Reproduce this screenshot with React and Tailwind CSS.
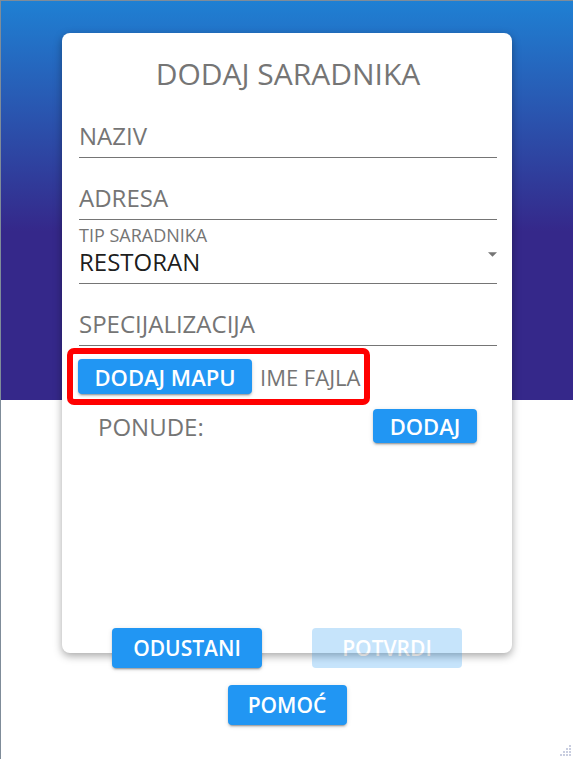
import React from 'react';

const font = { fontFamily: '"Open Sans", "Noto Sans", Arial, sans-serif' };

const Field = ({ label, pt }) => (
  <div className={`${pt} pb-[5px] border-b border-[#757575]`}>
    <div className="text-[24px] leading-[32px] text-[#757575]">{label}</div>
  </div>
);

const Btn = ({ children, className = '', disabled }) => (
  <button
    disabled={disabled}
    className={`bg-[#2196f3] text-white font-semibold rounded-[4px] shadow-[0_3px_1px_-2px_rgba(0,0,0,0.2),0_2px_2px_0_rgba(0,0,0,0.14),0_1px_5px_0_rgba(0,0,0,0.12)] ${className}`}
  >
    {children}
  </button>
);

const App = () => {
  return (
    <div
      style={font}
      className="relative min-h-[759px] w-full border-t border-l border-[#7f8c99] bg-[linear-gradient(180deg,#1f80d3_0px,#35288a_230px,#35288a_399px,#ffffff_399px)]"
    >
      <div className="flex flex-col items-center pt-[32px]">
        {/* card */}
        <div className="w-[450px] h-[620px] bg-white rounded-[8px] shadow-[0_3px_8px_rgba(0,0,0,0.35)] pl-[17px] pr-[15px] pt-[21px]">
          <h1 className="text-center text-[30px] leading-[40px] text-[#757575]">DODAJ SARADNIKA</h1>

          <div>
            <Field label="NAZIV" pt="pt-[26px]" />
            <Field label="ADRESA" pt="pt-[24px]" />

            <div className="pt-[5px] pb-[5px] border-b border-[#757575]">
              <div className="text-[18px] leading-[21px] text-[#757575]">TIP SARADNIKA</div>
              <div className="flex justify-between items-start">
                <span className="text-[24px] leading-[32px] text-black/90">RESTORAN</span>
                <svg width="9" height="5" viewBox="0 0 10 5" className="mt-[6px]">
                  <path d="M0 0 L10 0 L5 5 Z" fill="#757575" />
                </svg>
              </div>
            </div>

            <Field label="SPECIJALIZACIJA" pt="pt-[24px]" />
          </div>

          <div className="-ml-[12px] mt-[2px] inline-flex items-center gap-[8px] border-[6px] border-[#ff0000] rounded-[7px] pl-[5px] pr-[4px] py-[5px]">
            <Btn className="w-[174px] h-[35px] text-[22px] leading-none">DODAJ MAPU</Btn>
            <span className="text-[22px] leading-[28px] text-[#757575]">IME FAJLA</span>
          </div>

          <div className="mt-[3px] flex items-center justify-between pl-[19px] pr-[20px]">
            <span className="mt-[3px] text-[24px] leading-[32px] text-[#757575]">PONUDE:</span>
            <Btn className="w-[104px] h-[34px] text-[22px] leading-none">DODAJ</Btn>
          </div>
        </div>

        {/* actions */}
        <div className="relative z-10 -mt-[25px] flex gap-[50px]">
          <Btn className="w-[150px] h-[40px] text-[21px] leading-none">ODUSTANI</Btn>
          <Btn disabled className="w-[150px] h-[40px] text-[21px] leading-none opacity-25 shadow-none">
            POTVRDI
          </Btn>
        </div>
        <div className="mt-[17px]">
          <Btn className="w-[119px] h-[40px] text-[21px] leading-none">POMOĆ</Btn>
        </div>
      </div>

      {/* resize grip */}
      <svg width="12" height="12" viewBox="0 0 12 12" className="absolute right-[2px] bottom-[2px]">
        {[
          [10, 0], [10, 3], [7, 3], [10, 6], [7, 6], [4, 6], [10, 9], [7, 9], [4, 9], [1, 9],
        ].map(([x, y]) => (
          <rect key={`${x}-${y}`} x={x} y={y} width="2" height="2" fill="#c9cee0" />
        ))}
      </svg>
    </div>
  );
};

export default App;
